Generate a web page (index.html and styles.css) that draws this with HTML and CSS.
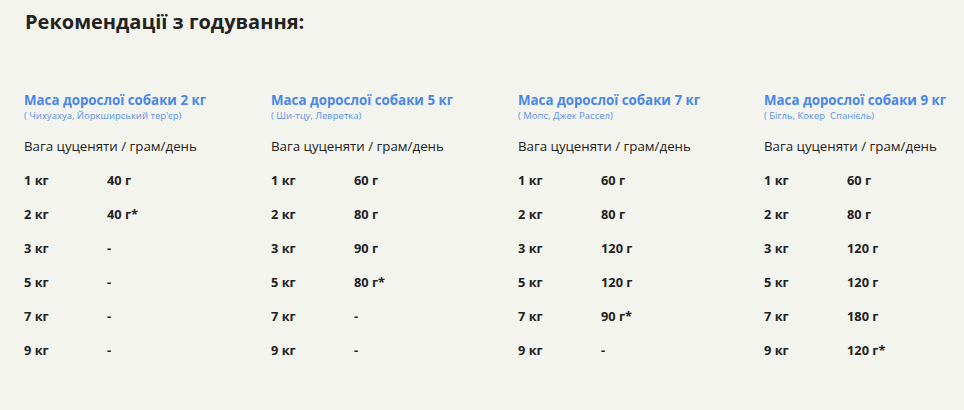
FILE: index.html
```html
<!DOCTYPE html>
<html lang="uk">
<head>
<meta charset="utf-8">
<link rel="stylesheet" href="styles.css">
</head>
<body>
<div class="page">
  <h2 class="title">Рекомендації з годування:</h2>
  <div class="cols">
    <div class="col">
      <div class="head">Маса дорослої собаки 2 кг</div>
      <div class="sub">( Чихуахуа, Йоркширський тер'єр)</div>
      <div class="label">Вага цуценяти / грам/день</div>
      <div class="row"><span>1 кг</span><span>40 г</span></div>
      <div class="row"><span>2 кг</span><span>40 г*</span></div>
      <div class="row"><span>3 кг</span><span>-</span></div>
      <div class="row"><span>5 кг</span><span>-</span></div>
      <div class="row"><span>7 кг</span><span>-</span></div>
      <div class="row"><span>9 кг</span><span>-</span></div>
    </div>
    <div class="col">
      <div class="head">Маса дорослої собаки 5 кг</div>
      <div class="sub">( Ши-тцу, Левретка)</div>
      <div class="label">Вага цуценяти / грам/день</div>
      <div class="row"><span>1 кг</span><span>60 г</span></div>
      <div class="row"><span>2 кг</span><span>80 г</span></div>
      <div class="row"><span>3 кг</span><span>90 г</span></div>
      <div class="row"><span>5 кг</span><span>80 г*</span></div>
      <div class="row"><span>7 кг</span><span>-</span></div>
      <div class="row"><span>9 кг</span><span>-</span></div>
    </div>
    <div class="col">
      <div class="head">Маса дорослої собаки 7 кг</div>
      <div class="sub">( Мопс, Джек Рассел)</div>
      <div class="label">Вага цуценяти / грам/день</div>
      <div class="row"><span>1 кг</span><span>60 г</span></div>
      <div class="row"><span>2 кг</span><span>80 г</span></div>
      <div class="row"><span>3 кг</span><span>120 г</span></div>
      <div class="row"><span>5 кг</span><span>120 г</span></div>
      <div class="row"><span>7 кг</span><span>90 г*</span></div>
      <div class="row"><span>9 кг</span><span>-</span></div>
    </div>
    <div class="col">
      <div class="head">Маса дорослої собаки 9 кг</div>
      <div class="sub">( Бігль, Кокер&nbsp; Спанієль)</div>
      <div class="label">Вага цуценяти / грам/день</div>
      <div class="row"><span>1 кг</span><span>60 г</span></div>
      <div class="row"><span>2 кг</span><span>80 г</span></div>
      <div class="row"><span>3 кг</span><span>120 г</span></div>
      <div class="row"><span>5 кг</span><span>120 г</span></div>
      <div class="row"><span>7 кг</span><span>180 г</span></div>
      <div class="row"><span>9 кг</span><span>120 г*</span></div>
    </div>
  </div>
</div>
</body>
</html>
```
FILE: styles.css
```css
html, body {
  margin: 0;
  padding: 0;
  background: #f4f4ee;
}
body {
  font-family: "Open Sans", "Liberation Sans", sans-serif;
  color: #222;
  width: 964px;
  height: 410px;
  overflow: hidden;
}
.page {
  padding: 8px 0 0 24px;
}
.title {
  margin: 0;
  font-size: 20px;
  font-weight: 700;
  line-height: 28px;
  color: #222;
  padding-left: 1px;
}
.cols {
  display: grid;
  grid-template-columns: 247px 247px 246px 200px;
  margin-top: 55px;
}
.head {
  color: #4a86e8;
  font-weight: 700;
  font-size: 13.3px;
  line-height: 18px;
}
.sub {
  color: #5a92ea;
  font-size: 9.5px;
  line-height: 14px;
}
.label {
  font-size: 13.3px;
  line-height: 18px;
  margin-top: 14px;
  margin-bottom: 16px;
}
.row {
  display: grid;
  grid-template-columns: 83px auto;
  font-size: 12.8px;
  font-weight: 700;
  line-height: 18px;
  height: 34px;
}
```
